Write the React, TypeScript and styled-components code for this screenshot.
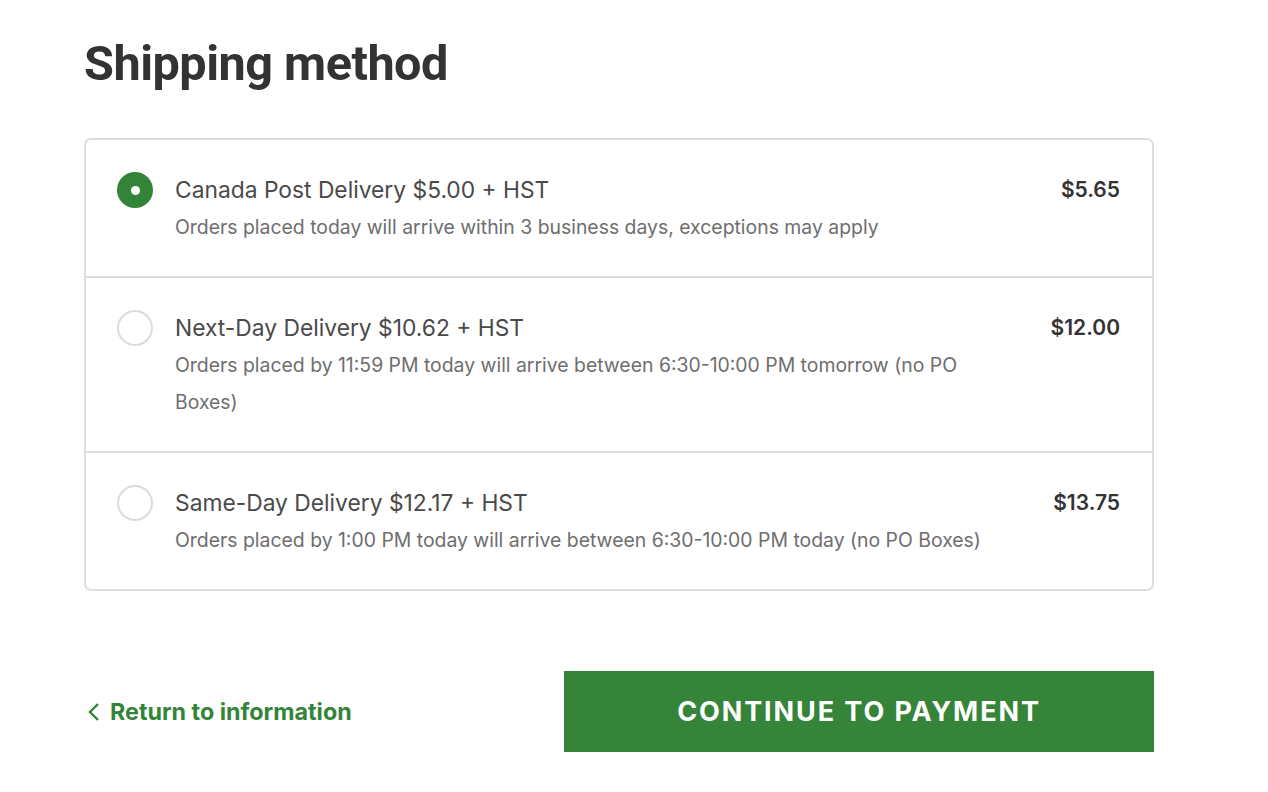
import React from "react";
import styled, { createGlobalStyle } from "styled-components";

const GlobalStyle = createGlobalStyle`
  html, body {
    margin: 0;
    padding: 0;
    background: #fff;
    font-family: Inter, "Noto Sans", sans-serif;
  }
`;

const Page = styled.div`
  width: 1070px;
  padding: 34px 0 0 84px;
`;

const Heading = styled.h1`
  font-family: Roboto, "Liberation Sans", sans-serif;
  font-size: 48.6px;
  font-weight: 700;
  color: #333;
  margin: 0 0 44px;
  line-height: 60px;
  letter-spacing: -0.5px;
`;

const MethodList = styled.div`
  border: 2px solid #dedede;
  border-radius: 7px;
  overflow: hidden;
`;

const MethodRow = styled.label<{ $first?: boolean }>`
  display: flex;
  align-items: flex-start;
  padding: 31px 32px 30px 31px;
  border-top: ${(p) => (p.$first ? "none" : "2px solid #dedede")};
  cursor: pointer;
`;

const Radio = styled.span<{ $checked?: boolean }>`
  flex: none;
  width: 36px;
  height: 36px;
  box-sizing: border-box;
  border-radius: 50%;
  margin: 1px 22px 0 0;
  display: flex;
  align-items: center;
  justify-content: center;
  background: ${(p) => (p.$checked ? "#338438" : "#fff")};
  border: ${(p) => (p.$checked ? "none" : "2px solid #dcdcdc")};

  &::after {
    content: "";
    display: ${(p) => (p.$checked ? "block" : "none")};
    width: 9px;
    height: 9px;
    border-radius: 50%;
    background: #fff;
  }
`;

const MethodText = styled.div`
  flex: 1;
  padding-right: 52px;
`;

const MethodTitle = styled.div`
  font-size: 22.8px;
  line-height: 38px;
  color: #4a4a4a;
`;

const MethodNote = styled.div`
  font-size: 19.4px;
  line-height: 37px;
  color: #6e6e6e;
`;

const Price = styled.div`
  font-size: 21px;
  font-weight: 600;
  line-height: 38px;
  color: #333;
`;

const Footer = styled.div`
  display: flex;
  align-items: center;
  justify-content: space-between;
  margin-top: 80px;
`;

const BackLink = styled.a`
  display: flex;
  align-items: center;
  gap: 10px;
  color: #338438;
  font-size: 23.3px;
  font-weight: 700;
  text-decoration: none;
  padding-left: 4px;
`;

const ContinueButton = styled.button`
  width: 590px;
  height: 81px;
  border: none;
  background: #358439;
  color: #fff;
  font-family: Inter, "Noto Sans", sans-serif;
  font-size: 27px;
  font-weight: 700;
  letter-spacing: 1.9px;
  text-transform: uppercase;
  cursor: pointer;
`;

const methods = [
  {
    title: "Canada Post Delivery $5.00 + HST",
    note: "Orders placed today will arrive within 3 business days, exceptions may apply",
    price: "$5.65",
    checked: true,
  },
  {
    title: "Next-Day Delivery $10.62 + HST",
    note: "Orders placed by 11:59 PM today will arrive between 6:30-10:00 PM tomorrow (no PO Boxes)",
    price: "$12.00",
  },
  {
    title: "Same-Day Delivery $12.17 + HST",
    note: "Orders placed by 1:00 PM today will arrive between 6:30-10:00 PM today (no PO Boxes)",
    price: "$13.75",
  },
];

export default function App() {
  return (
    <>
      <GlobalStyle />
      <Page>
        <Heading>Shipping method</Heading>
        <MethodList>
          {methods.map((m, i) => (
            <MethodRow key={m.title} $first={i === 0}>
              <Radio $checked={m.checked} />
              <MethodText>
                <MethodTitle>{m.title}</MethodTitle>
                <MethodNote>{m.note}</MethodNote>
              </MethodText>
              <Price>{m.price}</Price>
            </MethodRow>
          ))}
        </MethodList>
        <Footer>
          <BackLink href="#">
            <svg width="12" height="20" viewBox="0 0 12 20" fill="none">
              <path d="M10 2L2 10l8 8" stroke="#338438" strokeWidth="2.4" />
            </svg>
            Return to information
          </BackLink>
          <ContinueButton>Continue to payment</ContinueButton>
        </Footer>
      </Page>
    </>
  );
}
